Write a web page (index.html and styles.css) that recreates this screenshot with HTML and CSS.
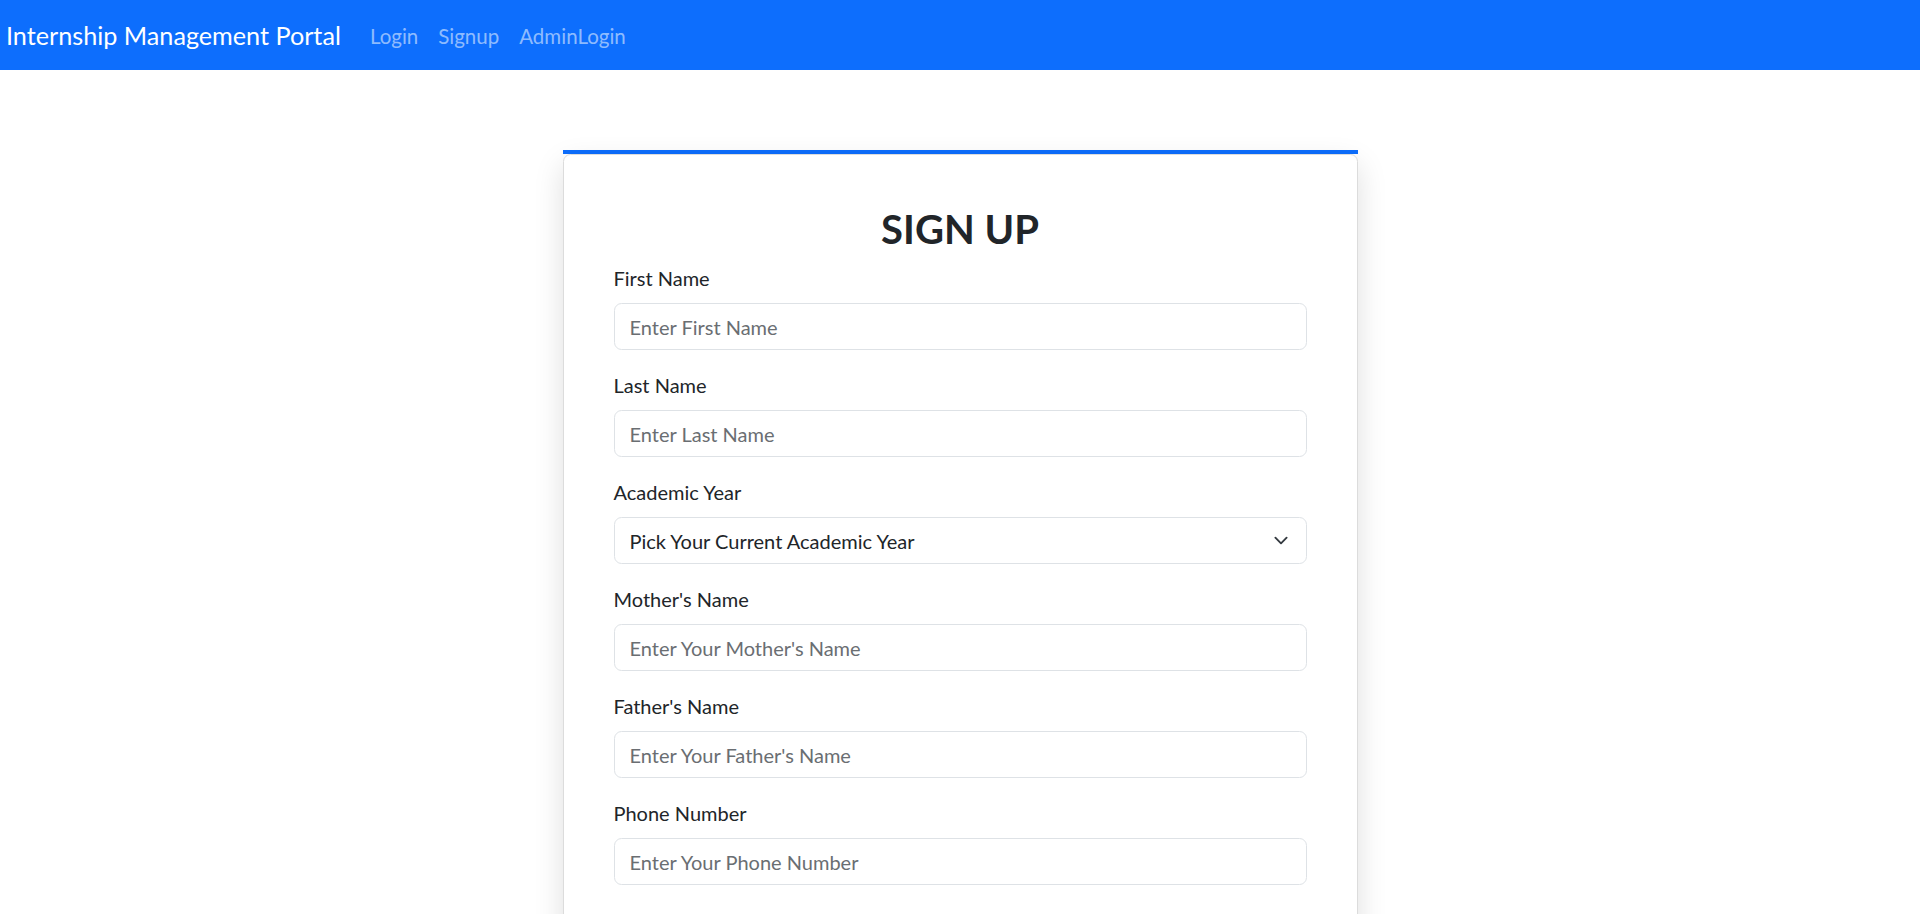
FILE: index.html
```html
<!DOCTYPE html>
<html lang="en">
<head>
<meta charset="utf-8">
<title>Internship Management Portal - Sign Up</title>
<link rel="stylesheet" href="styles.css">
</head>
<body>
<nav class="navbar">
  <a class="brand" href="#">Internship Management Portal</a>
  <ul class="nav-links">
    <li><a href="#">Login</a></li>
    <li><a href="#">Signup</a></li>
    <li><a href="#">AdminLogin</a></li>
  </ul>
</nav>

<main class="page">
  <section class="signup">
    <div class="accent-bar"></div>
    <form class="card">
      <h2 class="title">SIGN UP</h2>

      <div class="field">
        <label class="label" for="fname">First Name</label>
        <input class="control" id="fname" type="text" placeholder="Enter First Name">
      </div>

      <div class="field">
        <label class="label" for="lname">Last Name</label>
        <input class="control" id="lname" type="text" placeholder="Enter Last Name">
      </div>

      <div class="field">
        <label class="label" for="year">Academic Year</label>
        <select class="control select" id="year">
          <option>Pick Your Current Academic Year</option>
          <option>First Year</option>
          <option>Second Year</option>
          <option>Third Year</option>
          <option>Final Year</option>
        </select>
      </div>

      <div class="field">
        <label class="label" for="mname">Mother's Name</label>
        <input class="control" id="mname" type="text" placeholder="Enter Your Mother's Name">
      </div>

      <div class="field">
        <label class="label" for="faname">Father's Name</label>
        <input class="control" id="faname" type="text" placeholder="Enter Your Father's Name">
      </div>

      <div class="field">
        <label class="label" for="phone">Phone Number</label>
        <input class="control" id="phone" type="text" placeholder="Enter Your Phone Number">
      </div>

      <button class="submit" type="button">Sign Up</button>
    </form>
  </section>
</main>
</body>
</html>
```

FILE: styles.css
```css
* {
  box-sizing: border-box;
}

html, body {
  margin: 0;
  padding: 0;
}

body {
  font-family: Lato, "Open Sans", "Noto Sans", sans-serif;
  font-size: 20px;
  line-height: 1.5;
  color: #212529;
  background: #ffffff;
}

.navbar {
  height: 70px;
  background: #0d6efd;
  display: flex;
  align-items: center;
  padding: 2px 6px 0;
}

.brand {
  font-size: 25.2px;
  line-height: 37.5px;
  color: #ffffff;
  text-decoration: none;
  margin-right: 19px;
  white-space: nowrap;
}

.nav-links {
  list-style: none;
  margin: 0;
  padding: 0;
  display: flex;
}

.nav-links a {
  display: block;
  padding: 10px;
  font-size: 20.5px;
  line-height: 30px;
  color: rgba(255, 255, 255, 0.55);
  text-decoration: none;
}

.page {
  padding-top: 80px;
  padding-bottom: 60px;
}

.signup {
  width: 795px;
  margin: 0 auto;
  display: flex;
  flex-direction: column;
}

.accent-bar {
  height: 4px;
  background: #0d6efd;
}

.card {
  border: 1px solid #dcdcdc;
  border-radius: 7.5px;
  background: #ffffff;
  box-shadow: 0 10px 30px rgba(0, 0, 0, 0.13);
  padding: 50px;
  display: flex;
  flex-direction: column;
}

.title {
  margin: 0 0 10px;
  padding-top: 1px;
  font-size: 40px;
  line-height: 47px;
  font-weight: 700;
  text-align: center;
  color: #212529;
}

.field {
  display: flex;
  flex-direction: column;
  margin-bottom: 20px;
}

.label {
  font-size: 20px;
  line-height: 30px;
  margin-bottom: 10px;
  color: #212529;
}

.control {
  height: 47px;
  width: 100%;
  padding: 7px 15px;
  font-family: inherit;
  font-size: 20px;
  line-height: 30px;
  color: #212529;
  background-color: #ffffff;
  border: 1px solid #dee2e6;
  border-radius: 7.5px;
  outline: none;
}

.control::placeholder {
  color: #6a6e72;
  opacity: 1;
}

.select {
  appearance: none;
  -webkit-appearance: none;
  padding-right: 55px;
  background-image: url("data:image/svg+xml,%3csvg xmlns='http://www.w3.org/2000/svg' viewBox='0 0 16 16'%3e%3cpath fill='none' stroke='%23343a40' stroke-linecap='round' stroke-linejoin='round' stroke-width='2' d='m2 5 6 6 6-6'/%3e%3c/svg%3e");
  background-repeat: no-repeat;
  background-position: right 15px center;
  background-size: 20px 15px;
}

.submit {
  align-self: center;
  margin-top: 14px;
  padding: 7.5px 30px;
  font-family: inherit;
  font-size: 20px;
  line-height: 30px;
  color: #ffffff;
  background: #0d6efd;
  border: 1px solid #0d6efd;
  border-radius: 7.5px;
}
```
